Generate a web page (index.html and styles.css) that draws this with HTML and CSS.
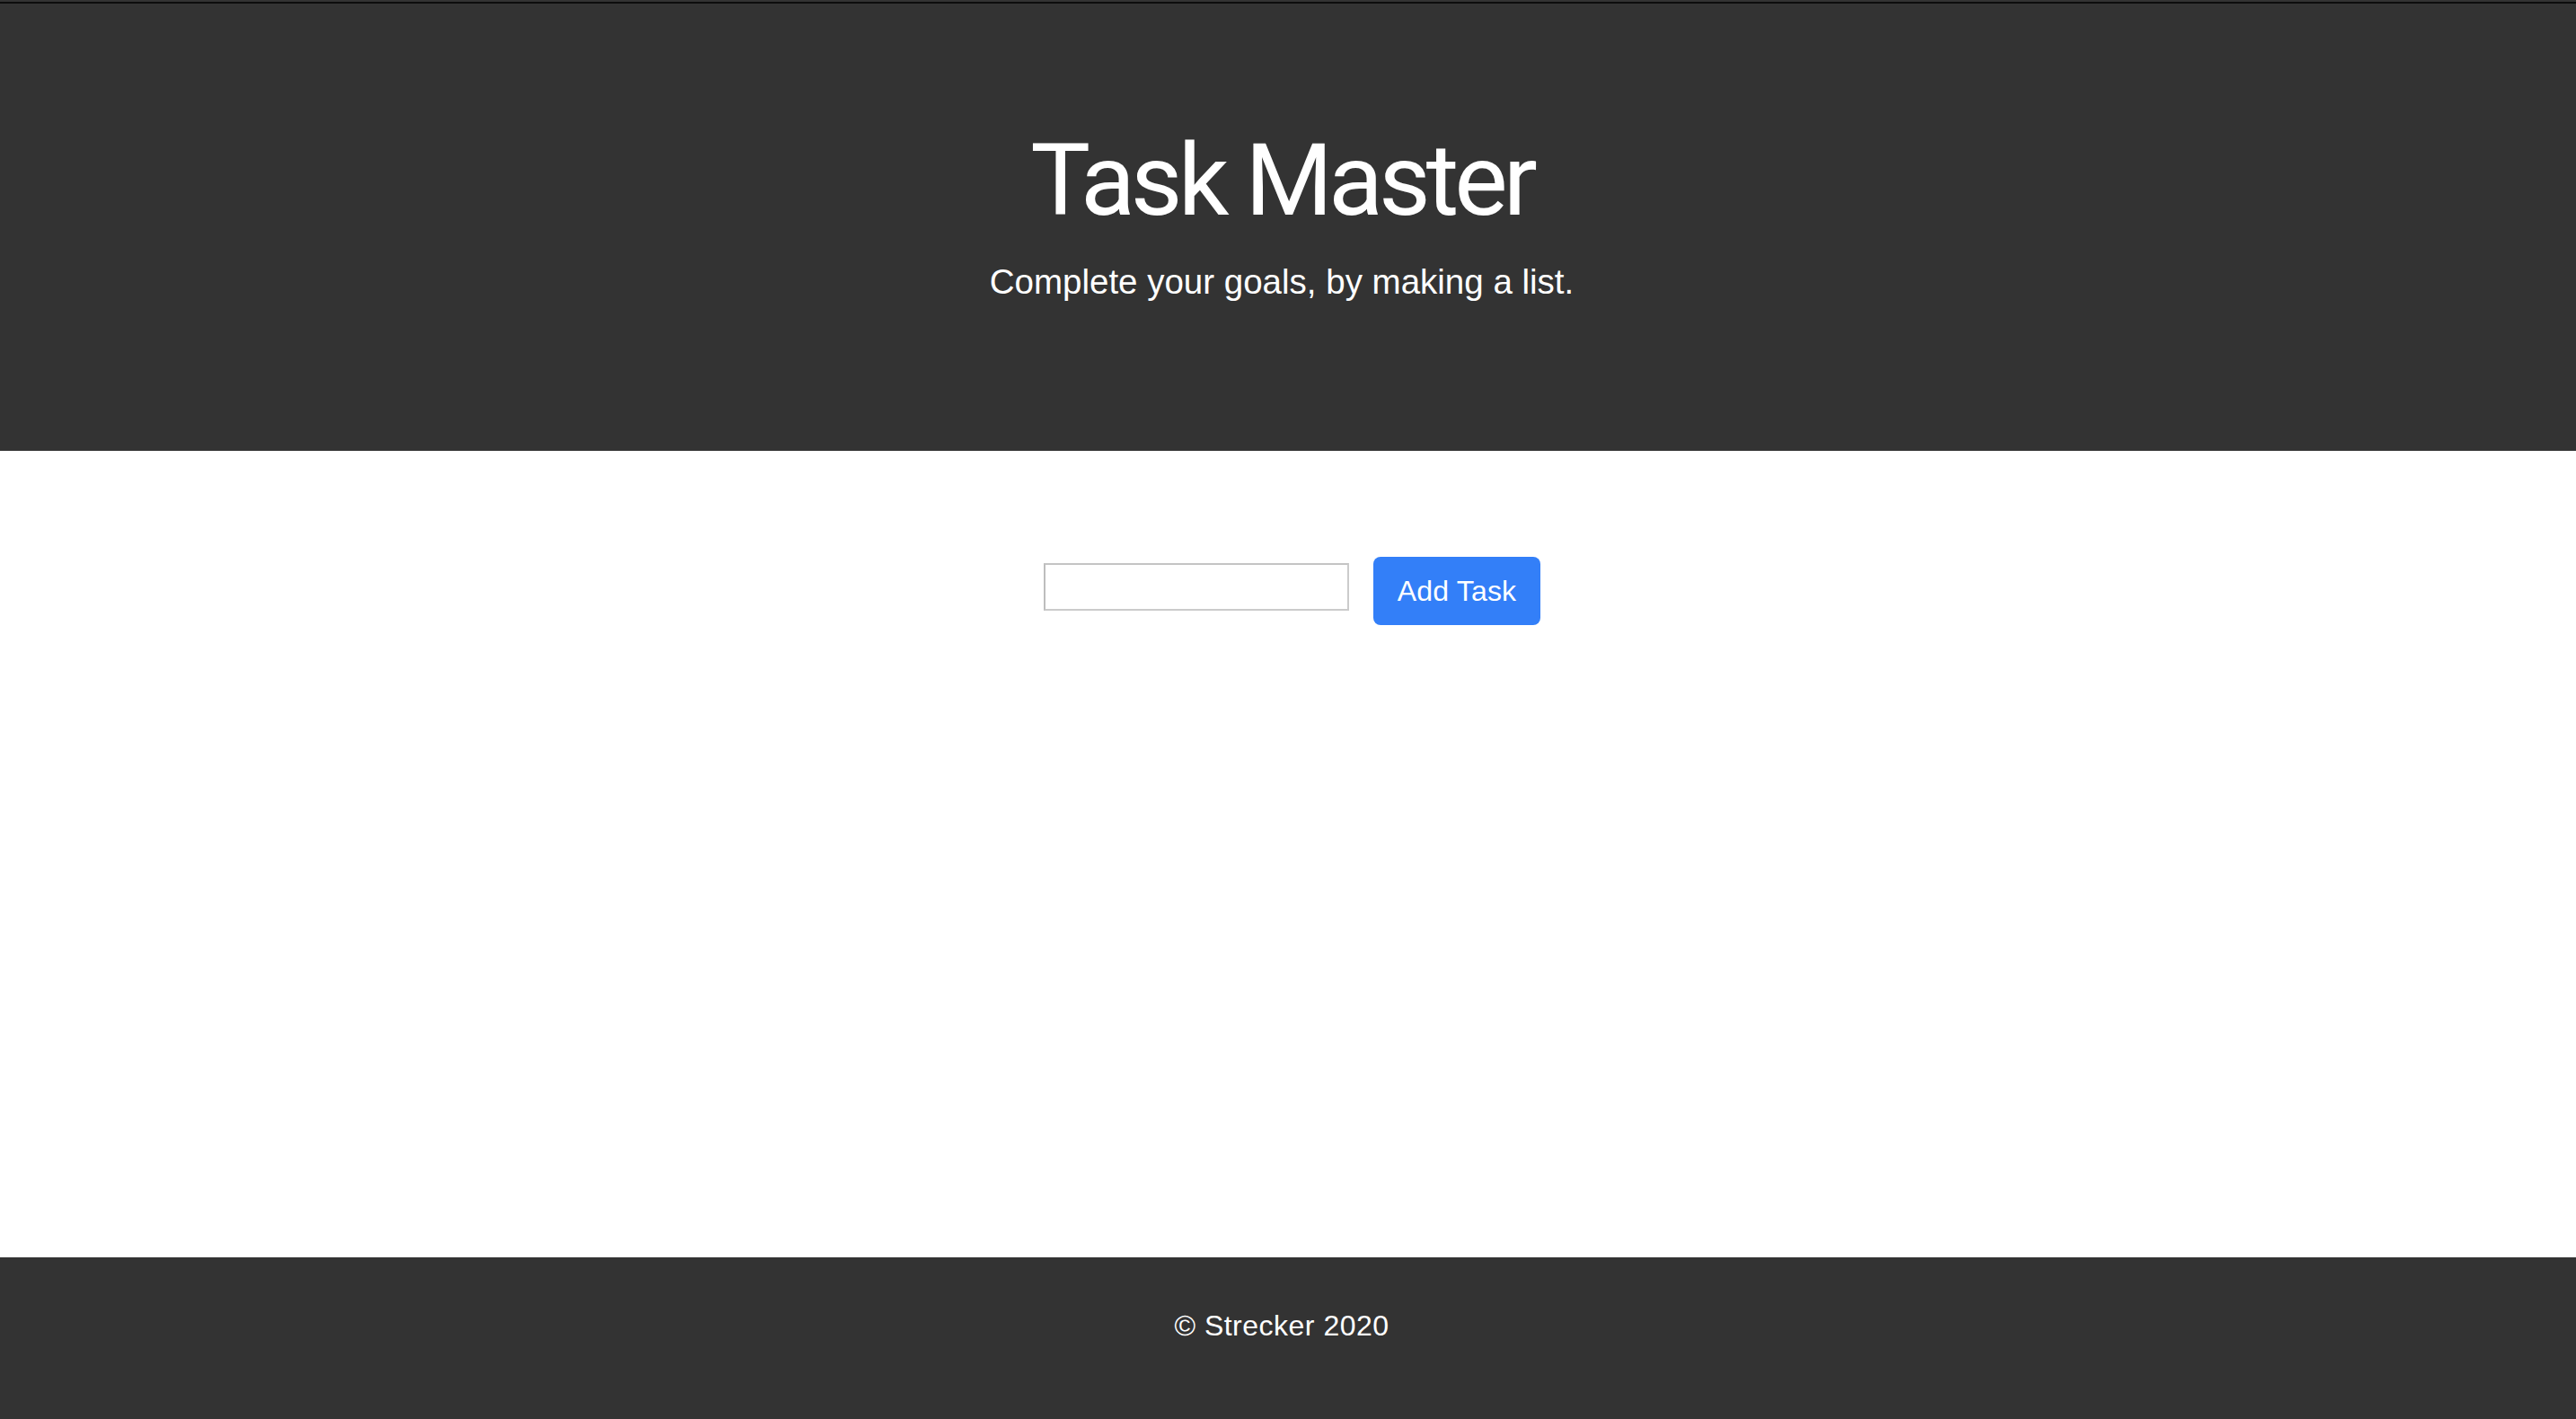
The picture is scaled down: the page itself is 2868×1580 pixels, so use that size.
FILE: index.html
```html
<!DOCTYPE html>
<html lang="en">
<head>
<meta charset="utf-8">
<title>Task Master</title>
<link rel="stylesheet" href="styles.css">
</head>
<body>
<div class="page">
  <header class="hero">
    <div class="edge"></div>
    <div class="hero-inner">
      <h1 class="title">Task Master</h1>
      <p class="lead">Complete your goals, by making a list.</p>
    </div>
  </header>
  <main class="main">
    <form class="task-form">
      <input class="task-input" type="text">
      <button class="btn-add" type="button">Add Task</button>
    </form>
  </main>
  <footer class="footer">
    <p class="copy">© Strecker 2020</p>
  </footer>
</div>
</body>
</html>
```
FILE: styles.css
```css
html, body {
  margin: 0;
  padding: 0;
  background: #ffffff;
}
body {
  font-family: "Liberation Sans", Arial, sans-serif;
  color: #212529;
}
.page {
  display: flex;
  flex-direction: column;
  min-height: 100vh;
}
.hero {
  background: #333333;
  color: #ffffff;
  padding-top: 2px;
  height: 502px;
  box-sizing: border-box;
}
.edge {
  height: 2px;
  background: #0d0d0d;
}
.hero-inner {
  display: flex;
  flex-direction: column;
  align-items: center;
  padding-right: 14px;
  padding-top: 130px;
}
.title {
  margin: 0;
  font-family: "Roboto", "Liberation Sans", sans-serif;
  font-weight: 400;
  font-size: 112px;
  line-height: 134px;
  letter-spacing: -5px;
}
.lead {
  margin: 17px 0 0;
  font-size: 38.5px;
  line-height: 57px;
  font-weight: 400;
}
.main {
  flex: 1;
  padding-top: 118px;
}
.task-form {
  display: flex;
  justify-content: center;
  align-items: flex-start;
  gap: 27px;
  margin: 0;
  padding-left: 9px;
}
.task-input {
  width: 340px;
  height: 53px;
  margin-top: 7px;
  box-sizing: border-box;
  border: 2px solid #cbcbcb;
  border-left-color: #bdbdbd;
  border-top-color: #c4c4c4;
  background: #ffffff;
  padding: 2px 4px;
  font-size: 26px;
  outline: none;
}
.btn-add {
  height: 76px;
  padding: 0 27px;
  border: 0;
  border-radius: 8px;
  background: #337ff8;
  color: #ffffff;
  font-family: "Liberation Sans", Arial, sans-serif;
  font-size: 32px;
  letter-spacing: 0.2px;
  cursor: pointer;
}
.footer {
  background: #333333;
  color: #ffffff;
  height: 180px;
  box-sizing: border-box;
  padding-top: 52px;
  padding-right: 14px;
  text-align: center;
}
.copy {
  margin: 0;
  font-size: 32px;
  line-height: 48px;
  letter-spacing: 0.5px;
}
```
